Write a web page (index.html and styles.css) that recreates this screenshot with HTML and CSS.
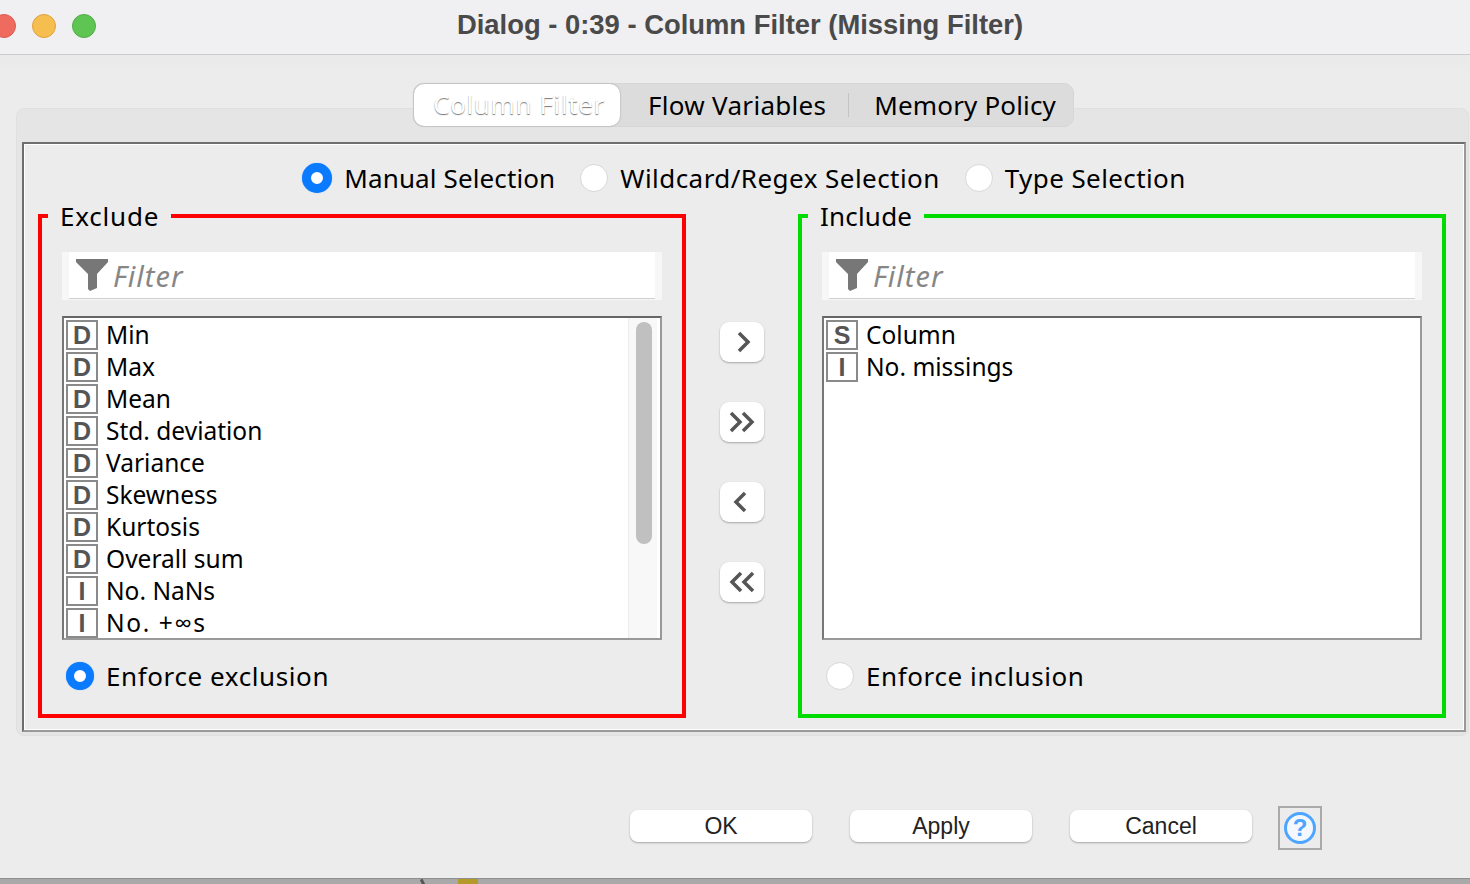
FILE: index.html
```html
<!DOCTYPE html>
<html lang="en">
<head>
  <meta charset="UTF-8" />
  <meta name="viewport" content="width=device-width, initial-scale=1.0" />
  <title>Dialog - 0:39 - Column Filter (Missing Filter)</title>
  <link rel="stylesheet" href="styles.css">
</head>
<body>
  <div class="window">

    <!-- Title bar -->
    <header class="titlebar">
      <div class="lights">
        <span class="light light-red"></span>
        <span class="light light-yellow"></span>
        <span class="light light-green"></span>
      </div>
      <h1 class="title">Dialog - 0:39 - Column Filter (Missing Filter)</h1>
    </header>

    <main class="dialog">
      <div class="tabpane">
        <nav class="tabs">
          <span class="tab tab-active">Column Filter</span>
          <span class="tab tab-flow">Flow Variables</span>
          <span class="tab-sep"></span>
          <span class="tab tab-memory">Memory Policy</span>
        </nav>

        <div class="panel">
          <!-- Selection mode -->
          <div class="modes">
            <label class="radio radio-big"><span class="dot on"></span>Manual Selection</label>
            <label class="radio radio-wild"><span class="dot"></span>Wildcard/Regex Selection</label>
            <label class="radio radio-type"><span class="dot"></span>Type Selection</label>
          </div>

          <div class="columns">
            <!-- Exclude -->
            <fieldset class="box box-exclude">
              <legend>Exclude</legend>
              <div class="filter">
                <div class="filter-inner">
                  <svg class="funnel" width="32" height="32" viewBox="0 0 32 32"><polygon points="0,0 32,0 32,3 21,15 21,29 14,32 12,30 12,15 0,3" /></svg>
                  <span class="filter-text">Filter</span>
                </div>
              </div>
              <div class="list">
                <ul class="rows">
                  <li><span class="type">D</span>Min</li>
                  <li><span class="type">D</span>Max</li>
                  <li><span class="type">D</span>Mean</li>
                  <li><span class="type">D</span>Std. deviation</li>
                  <li><span class="type">D</span>Variance</li>
                  <li><span class="type">D</span>Skewness</li>
                  <li><span class="type">D</span>Kurtosis</li>
                  <li><span class="type">D</span>Overall sum</li>
                  <li><span class="type">I</span>No. NaNs</li>
                  <li class="row-wide"><span class="type">I</span>No. +∞s</li>
                </ul>
                <div class="scrollbar"><div class="thumb"></div></div>
              </div>
              <label class="radio enforce"><span class="dot on"></span>Enforce exclusion</label>
            </fieldset>

            <!-- Move buttons -->
            <div class="moves">
              <button class="move" type="button"><svg width="44" height="40" viewBox="0 0 44 40"><path d="M19 11 L28 20 L19 29" /></svg></button>
              <button class="move" type="button"><svg width="44" height="40" viewBox="0 0 44 40"><path d="M11 11 L20 20 L11 29 M23 11 L32 20 L23 29" /></svg></button>
              <button class="move" type="button"><svg width="44" height="40" viewBox="0 0 44 40"><path d="M25 11 L16 20 L25 29" /></svg></button>
              <button class="move" type="button"><svg width="44" height="40" viewBox="0 0 44 40"><path d="M21 11 L12 20 L21 29 M33 11 L24 20 L33 29" /></svg></button>
            </div>

            <!-- Include -->
            <fieldset class="box box-include">
              <legend>Include</legend>
              <div class="filter">
                <div class="filter-inner">
                  <svg class="funnel" width="32" height="32" viewBox="0 0 32 32"><polygon points="0,0 32,0 32,3 21,15 21,29 14,32 12,30 12,15 0,3" /></svg>
                  <span class="filter-text">Filter</span>
                </div>
              </div>
              <div class="list">
                <ul class="rows">
                  <li><span class="type">S</span>Column</li>
                  <li><span class="type">I</span>No. missings</li>
                </ul>
              </div>
              <label class="radio enforce"><span class="dot"></span>Enforce inclusion</label>
            </fieldset>
          </div>
        </div>
      </div>

      <!-- Bottom buttons -->
      <div class="actions">
        <button class="action" type="button">OK</button>
        <button class="action" type="button">Apply</button>
        <button class="action" type="button">Cancel</button>
        <div class="help"><span class="help-icon">?</span></div>
      </div>
    </main>

    <!-- Bit of the window behind the dialog -->
    <div class="behind">
      <span class="behind-line"></span>
      <span class="behind-node"></span>
    </div>
  </div>
</body>
</html>
```

FILE: styles.css
```css
* {
  box-sizing: border-box;
}

html, body {
  margin: 0;
  height: 100%;
}

body {
  font-family: "Noto Sans", "Open Sans", sans-serif;
  font-size: 26px;
  color: #000;
  background-color: #ececec;
  overflow: hidden;
}

.window {
  height: 884px;
  display: flex;
  flex-direction: column;
}

/* Title bar */
.titlebar {
  height: 55px;
  flex: none;
  display: flex;
  align-items: center;
  justify-content: center;
  padding: 0 0 5px 10px;
  background-color: #f0eff2;
  border-bottom: 1px solid #cbcbcb;
  position: relative;
}

.lights {
  position: absolute;
  left: -8px;
  top: 14px;
  display: flex;
  gap: 16px;
}

.light {
  width: 24px;
  height: 24px;
  border-radius: 50%;
  border: 1px solid transparent;
}

.light-red {
  background-color: #ef6a5f;
  border-color: #dc5a50;
}

.light-yellow {
  background-color: #f6bd4f;
  border-color: #dfa23c;
}

.light-green {
  background-color: #5ec552;
  border-color: #51ab46;
}

.title {
  margin: 0;
  font-family: "Liberation Sans", Arial, sans-serif;
  font-size: 27.4px;
  font-weight: 700;
  color: #4a4a4a;
}

/* Main area */
.dialog {
  flex: 1;
  padding-top: 20px;
  background: linear-gradient(#eaeaea, #ececec 20px);
}

.tabpane {
  margin: 33px 1px 0 16px;
  height: 628px;
  padding: 0 2px 4px 5px;
  background-color: #e5e5e5;
  border: 1px solid #e0e0e0;
  border-radius: 8px;
}

.tabs {
  width: 661px;
  height: 44px;
  margin: -26px 0 0 391px;
  display: flex;
  align-items: center;
  background-color: #dcdcdc;
  border-radius: 10px;
  border: 1px solid #d6d6d6;
}

.tab {
  line-height: 40px;
}

.tab-active {
  width: 206px;
  height: 42px;
  padding-left: 4px;
  text-align: center;
  letter-spacing: 0.6px;
  color: #fff;
  text-shadow: 0 1px 1px #777;
  background-color: #fff;
  border-radius: 10px;
  box-shadow: 0 0 2px #999;
}

.tab-flow {
  margin-left: 28px;
  letter-spacing: 0.3px;
}

.tab-memory {
  letter-spacing: 0.15px;
}

.tab-sep {
  width: 1px;
  height: 24px;
  margin: 0 25px 0 22px;
  background-color: #c4c4c4;
}

.panel {
  height: 590px;
  margin-top: 15px;
  border: 2px solid #999;
  border-top-color: #6e6e6e;
  border-left-color: #6e6e6e;
  background-color: #ececec;
  box-shadow: inset 0 0 0 1px #fff;
}

/* Radios */
.modes {
  height: 56px;
  padding-top: 18px;
  display: flex;
  justify-content: center;
  align-items: flex-start;
  gap: 25px;
}

.radio {
  display: flex;
  align-items: center;
  gap: 12px;
  line-height: 32px;
}

.radio-big {
  letter-spacing: 0.12px;
}

.radio-wild {
  letter-spacing: 0.45px;
}

.radio-type {
  letter-spacing: 0.4px;
}

.dot {
  width: 28px;
  height: 28px;
  border-radius: 50%;
  background-color: #fff;
  border: 1px solid #d8d8d8;
  flex: none;
}

.dot.on {
  background-color: #fff;
  border: 8px solid #0a7bff;
  box-shadow: 0 0 1px #5aa5ff;
}

.radio-big .dot {
  width: 30px;
  height: 30px;
  border-width: 9px;
}

/* Fieldsets */
.columns {
  display: grid;
  grid-template-columns: 648px 112px 648px;
  margin-left: 14px;
}

.box {
  margin: 0;
  min-width: 0;
  height: 518px;
  padding: 20px 20px 0;
  border: 4px solid #f00;
}

.box-include {
  border-color: #00dc00;
}

.box legend {
  margin-left: -14px;
  padding: 0 12px;
  line-height: 32px;
}

.box-exclude legend {
  letter-spacing: 0.8px;
}

.box-include legend {
  letter-spacing: 0.2px;
}

.filter {
  height: 48px;
  padding: 0 7px;
  background-color: #f7f7f7;
}

.filter-inner {
  height: 47px;
  padding-left: 7px;
  display: flex;
  align-items: center;
  gap: 5px;
  background-color: #fff;
  border-bottom: 1px solid #cfcfcf;
}

.funnel {
  fill: #777;
  flex: none;
}

.filter-text {
  font-style: italic;
  font-size: 29px;
  letter-spacing: 1px;
  color: #868686;
}

.list {
  height: 324px;
  margin-top: 16px;
  background-color: #fff;
  border: 2px solid #999;
  border-top-color: #666;
  border-left-color: #777;
  position: relative;
  overflow: hidden;
}

.rows {
  list-style: none;
  margin: 0;
  padding: 1px 0 0 2px;
}

.rows li {
  height: 32px;
  display: flex;
  align-items: flex-start;
  gap: 8px;
  font-size: 24.5px;
  line-height: 31px;
  white-space: nowrap;
}

.rows .row-wide {
  letter-spacing: 1.6px;
}

.type {
  width: 32px;
  height: 30px;
  margin-top: 1px;
  display: flex;
  align-items: center;
  justify-content: center;
  flex: none;
  border: 2px solid #8a8a8a;
  font-family: "Liberation Sans", Arial, sans-serif;
  font-size: 25px;
  font-weight: 700;
  letter-spacing: 0;
  color: #555;
}

.scrollbar {
  position: absolute;
  top: 0;
  bottom: 0;
  right: 3px;
  width: 29px;
  padding: 4px 5px 0 7px;
  background-color: #f8f8f8;
  border-left: 1px solid #ececec;
}

.thumb {
  width: 16px;
  height: 222px;
  border-radius: 8px;
  background-color: #c0c0c0;
}

.enforce {
  margin: 20px 0 0 4px;
  letter-spacing: 0.6px;
}

/* Arrow buttons */
.moves {
  display: flex;
  flex-direction: column;
  align-items: center;
  gap: 40px;
  padding-top: 122px;
}

.move {
  width: 44px;
  height: 40px;
  padding: 0;
  border: none;
  background-color: #fff;
  border-radius: 9px;
  box-shadow: 0 1px 2px rgba(0, 0, 0, 0.3);
}

.move svg {
  display: block;
  fill: none;
  stroke: #555;
  stroke-width: 3.5;
}

/* Bottom row */
.actions {
  margin-top: 70px;
  padding-left: 630px;
  display: flex;
  align-items: flex-start;
  gap: 38px;
}

.action {
  width: 182px;
  height: 32px;
  margin-top: 4px;
  padding: 0;
  border: none;
  border-radius: 8px;
  background-color: #fff;
  box-shadow: 0 1px 2px rgba(0, 0, 0, 0.3);
  font-family: "Liberation Sans", Arial, sans-serif;
  font-size: 23px;
  color: #222;
}

.help {
  width: 44px;
  height: 44px;
  margin-left: -12px;
  display: flex;
  align-items: center;
  justify-content: center;
  border: 2px solid #aaa;
}

.help-icon {
  width: 32px;
  height: 32px;
  display: flex;
  align-items: center;
  justify-content: center;
  border: 3px solid #4ea5ff;
  border-radius: 50%;
  background-color: #f4f8fc;
  font-family: "Liberation Sans", Arial, sans-serif;
  font-size: 24px;
  font-weight: 700;
  color: #4ea5ff;
}

/* Sliver of the window behind */
.behind {
  height: 6px;
  flex: none;
  position: relative;
  background-color: #a9a9a9;
  border-top: 1px solid #8f8f8f;
}

.behind-line {
  position: absolute;
  left: 421px;
  top: 0;
  width: 3px;
  height: 6px;
  background-color: #555;
  transform: rotate(-25deg);
}

.behind-node {
  position: absolute;
  left: 458px;
  top: 0;
  width: 20px;
  height: 6px;
  background-color: #b39a2b;
}
```
